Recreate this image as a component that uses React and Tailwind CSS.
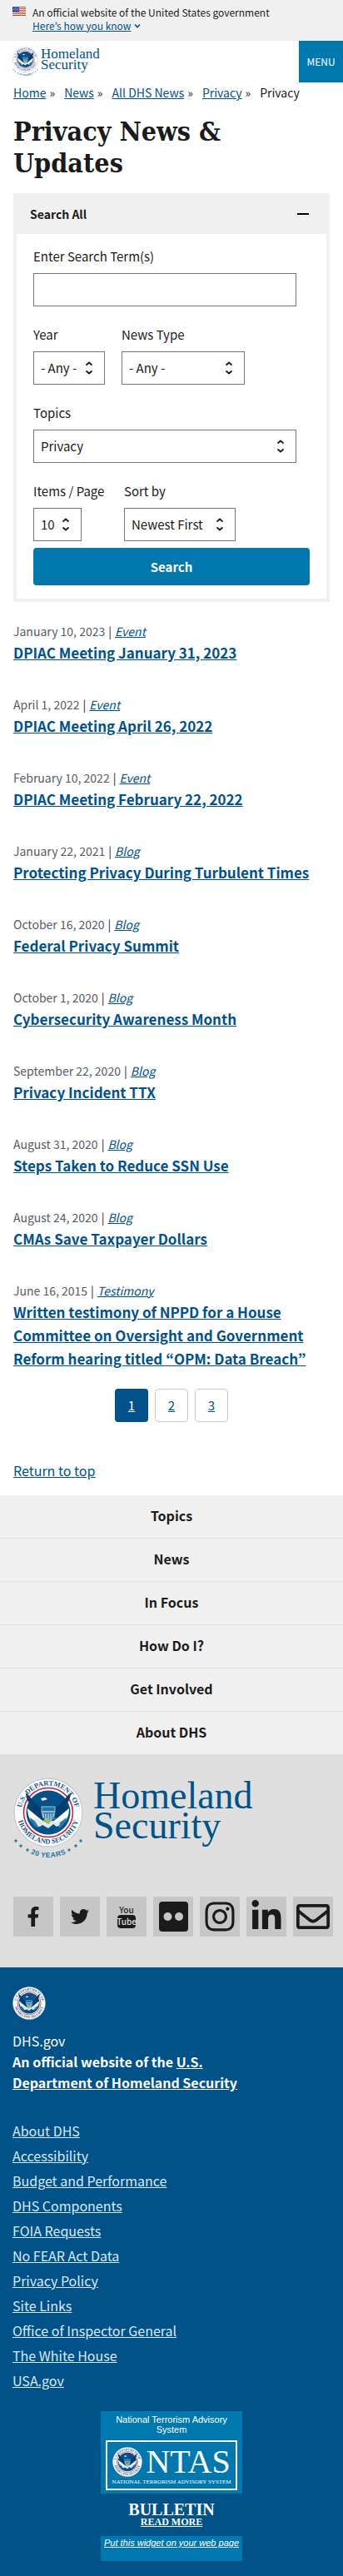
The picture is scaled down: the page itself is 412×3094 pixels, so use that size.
import { useId } from "react";
import { FaFacebookF, FaTwitter, FaInstagram, FaLinkedinIn, FaRegEnvelope } from "react-icons/fa";

const news = [
  ["January 10, 2023", "Event", "DPIAC Meeting January 31, 2023"],
  ["April 1, 2022", "Event", "DPIAC Meeting April 26, 2022"],
  ["February 10, 2022", "Event", "DPIAC Meeting February 22, 2022"],
  ["January 22, 2021", "Blog", "Protecting Privacy During Turbulent Times"],
  ["October 16, 2020", "Blog", "Federal Privacy Summit"],
  ["October 1, 2020", "Blog", "Cybersecurity Awareness Month"],
  ["September 22, 2020", "Blog", "Privacy Incident TTX"],
  ["August 31, 2020", "Blog", "Steps Taken to Reduce SSN Use"],
  ["August 24, 2020", "Blog", "CMAs Save Taxpayer Dollars"],
  ["June 16, 2015", "Testimony", "Written testimony of NPPD for a House Committee on Oversight and Government Reform hearing titled “OPM: Data Breach”"],
];

const footerNav = ["Topics", "News", "In Focus", "How Do I?", "Get Involved", "About DHS"];

const footerLinks = [
  "About DHS",
  "Accessibility",
  "Budget and Performance",
  "DHS Components",
  "FOIA Requests",
  "No FEAR Act Data",
  "Privacy Policy",
  "Site Links",
  "Office of Inspector General",
  "The White House",
  "USA.gov",
];

function Star({ x, y, r = 2.4, fill = "#1d7f95" }) {
  const pts = Array.from({ length: 10 }, (_, i) => {
    const a = (Math.PI / 5) * i - Math.PI / 2;
    const q = i % 2 ? r * 0.5 : r;
    return `${x + q * Math.cos(a)},${y + q * Math.sin(a)}`;
  }).join(" ");
  return <polygon points={pts} fill={fill} />;
}

function Seal({ className, anniversary = false }) {
  const id = useId();
  return (
    <svg className={className} viewBox={anniversary ? "0 0 84 98" : "0 0 84 84"} aria-hidden="true">
      <defs>
        <path id={`${id}t`} d="M9.5 42a32.5 32.5 0 0 1 65 0" />
        <path id={`${id}b`} d="M4.5 42a37.5 37.5 0 0 0 75 0" />
        <path id={`${id}y`} d="M2 74Q42 110 82 74" />
      </defs>
      <circle cx="42" cy="42" r="41.5" fill="#c3c8ce" />
      <circle cx="42" cy="42" r="40.3" fill="#fff" />
      <circle cx="42" cy="42" r="29.5" fill="#fff" stroke="#c41f3e" strokeWidth="1.5" />
      <circle cx="42" cy="42" r="26.5" fill="#005288" />
      <path d="M15 18c5 4 8 10 13 14 4 4 8 5 9 9l-4 10c-7-5-13-11-16-18l5 2c-4-5-7-11-7-17z" fill="#003f70" />
      <path d="M69 18c-5 4-8 10-13 14-4 4-8 5-9 9l4 10c7-5 13-11 16-18l-5 2c4-5 7-11 7-17z" fill="#003f70" />
      <path d="M17 37l17 14 4 3-6 5-9-5c-4-4-6-10-6-17z M67 37L50 51l-4 3 6 5 9-5c4-4 6-10 6-17z" fill="#fff" />
      <path d="M20 48l11 8-2 5c-4-3-8-7-9-13z M64 48l-11 8 2 5c4-3 8-7 9-13z" fill="#2c78ab" />
      <path d="M31 20q5-4 11-4 7 0 12 4l3 3-8-2-3 1v6l4 5H35l2-7-2-4-9 1z" fill="#0b4f86" />
      <path d="M33 25l5-1 3 2-6 2z" fill="#fff" />
      <path d="M34 35h16v6q-1 8-8 12-7-4-8-12z" fill="#2372a8" stroke="#dceaf2" strokeWidth=".7" />
      <path d="M34.500 41h15M36 43v5M39 43v8M42 43v9M45 43v8M48 43v5" stroke="#fff" strokeWidth="1" />
      <path d="M24 49q7 0 10 4l7-4 10 5 6-4-2 8-7-2-6 5-7-4-5 2z" fill="#dfe9ec" />
      <path d="M35 52l6-3 5 3-4 4z" fill="#a6b763" />
      <path d="M43 48l7-2M43 51l8-2" stroke="#5eb0d6" strokeWidth="1.200" />
      <g fill="#17588c" fontFamily="'Liberation Serif', serif" fontWeight="700">
        <text fontSize="8.500" textAnchor="middle">
          <textPath href={`#${id}t`} startOffset="50%">U.S. DEPARTMENT OF</textPath>
        </text>
        <text fontSize="8.500" textAnchor="middle">
          <textPath href={`#${id}b`} startOffset="50%">HOMELAND SECURITY</textPath>
        </text>
      </g>
      {anniversary && (
        <g>
          <Star x={3} y={76} />
          <Star x={9} y={82} />
          <Star x={17} y={87} fill="#2a7ca4" />
          <Star x={67} y={87} fill="#2a7ca4" />
          <Star x={75} y={82} />
          <Star x={81} y={76} />
          <text fontSize="8.500" fontWeight="700" fill="#1c74a8" fontFamily="'Liberation Sans', sans-serif" textAnchor="middle">
            <textPath href={`#${id}y`} startOffset="50%">
              <tspan dy="4">20 YEARS</tspan>
            </textPath>
          </text>
        </g>
      )}
    </svg>
  );
}

function Flag() {
  return (
    <svg className="mt-2 h-[11px] w-4 shrink-0" viewBox="0 0 16 11" aria-hidden="true">
      <path fill="#fff" d="M0 0h16v11H0z" />
      <path fill="#db3e1f" d="M7 0h9v1H7zM7 2h9v1H7zM7 4h9v1H7zM0 6h16v1H0zM0 8h16v1H0zM0 10h16v1H0z" />
      <path fill="#1e33b1" d="M0 0h8v6H0z" />
      <path stroke="#fff" strokeWidth=".7" strokeDasharray=".8 1" d="M.8 1h7M1.500 2.300h6M.8 3.600h7M1.500 4.900h6" />
    </svg>
  );
}

function SelectField({ id, label, options, className }) {
  return (
    <div className={className}>
      <label htmlFor={id} className="block whitespace-nowrap text-[15px] leading-6">{label}</label>
      <div className="relative mt-2">
        <select id={id} className="block h-10 w-full appearance-none rounded-none border border-[#757575] bg-white pr-6 pl-2 text-[15px] leading-6">
          {options.map((o) => <option key={o}>{o}</option>)}
        </select>
        <svg className="pointer-events-none absolute top-3 right-3.5 h-4 w-2.5" viewBox="0 0 10 16" fill="none" stroke="#1b1b1b" strokeWidth="1.800" aria-hidden="true">
          <path d="M1.500 4.500L5 1.500l3.500 3M1.500 11.500l3.500 3 3.500-3" />
        </svg>
      </div>
    </div>
  );
}

function YouTubeMark() {
  return (
    <svg className="size-12" viewBox="0 0 48 48" aria-hidden="true">
      <g fontFamily="'Liberation Sans Narrow', 'Noto Sans CJK KR', sans-serif" fontWeight="500" textAnchor="middle">
        <text x="24" y="20" fontSize="10" fill="#1b1b1b">You</text>
        <rect x="13" y="22" width="22" height="16" rx="4" fill="#1b1b1b" />
        <text x="24" y="34" fontSize="10" fill="#e0e0e0">Tube</text>
      </g>
    </svg>
  );
}

function FlickrMark() {
  return (
    <svg className="size-12" viewBox="0 0 48 48" aria-hidden="true">
      <rect x="7" y="6" width="35" height="36" rx="4" fill="#1b1b1b" />
      <circle cx="17.500" cy="24" r="5" fill="#c6c6c6" />
      <circle cx="31" cy="24" r="5" fill="#c6c6c6" />
    </svg>
  );
}

const social = [
  ["Facebook", <FaFacebookF className="size-6" />],
  ["Twitter", <FaTwitter className="size-[22px]" />],
  ["YouTube", <YouTubeMark />],
  ["Flickr", <FlickrMark />],
  ["Instagram", <FaInstagram className="size-10" />],
  ["LinkedIn", <FaLinkedinIn className="size-10" />],
  ["Email", <FaRegEnvelope className="size-10" />],
];

export default function App() {
  return (
    <div className="bg-white font-['Noto_Sans_CJK_KR',sans-serif] text-[15px] leading-6 text-[#1b1b1b]">
      <section aria-label="Official website" className="flex gap-2 bg-[#f0f0f0] pr-4 pb-2 pl-[15px] text-[12px] leading-4">
        <Flag />
        <div className="pt-[7px] pb-0.5">
          <p>An official website of the United States government</p>
          <button type="button" className="flex items-center gap-1 text-[#005288]">
            <span className="underline">Here’s how you know</span>
            <svg className="h-2 w-2" viewBox="0 0 8 8" fill="none" stroke="currentColor" strokeWidth="1.600" aria-hidden="true"><path d="M1 2.500l3 3 3-3" /></svg>
          </button>
        </div>
      </section>

      <header className="flex h-[50px] items-stretch justify-between pl-[15px]">
        <a href="#" className="flex gap-[3px] pt-[7px] font-['Liberation_Serif',serif] text-[17px] leading-[13px] text-[#005288]">
          <Seal className="h-9 w-[31px]" anniversary />
          <span className="pt-0.5">Homeland<br />Security</span>
        </a>
        <button type="button" className="w-[53px] bg-[#0078ae] text-[12px] text-white">MENU</button>
      </header>

      <main className="px-4">
        <nav aria-label="Breadcrumb">
          <ol className="flex gap-[11px] text-[14px] leading-6">
            {["Home", "News", "All DHS News", "Privacy"].map((c) => (
              <li key={c} className="flex gap-1"><a href="#" className="text-[#005288] underline">{c}</a><span>»</span></li>
            ))}
            <li>Privacy</li>
          </ol>
        </nav>

        <h1 className="mt-4 font-['DejaVu_Serif_Condensed','DejaVu_Serif',serif] text-[32px] leading-[38px] font-bold">Privacy News &amp;<br />Updates</h1>

        <section className="mt-[17px]">
          <h2>
            <button type="button" aria-expanded="true" className="flex h-[49px] w-full items-center justify-between bg-[#f0f0f0] pr-[25px] pl-5 text-[14px] font-bold">
              Search All
              <svg className="h-4 w-3.5" viewBox="0 0 14 16" aria-hidden="true"><path d="M0 8h14" stroke="#000" strokeWidth="2" /></svg>
            </button>
          </h2>
          <form onSubmit={(e) => e.preventDefault()} className="border-4 border-t-0 border-[#f0f0f0] pt-[15px] pr-5 pb-4 pl-5">
            <div className="flex flex-col gap-[22px] pr-4">
              <div>
                <label htmlFor="term" className="block leading-6">Enter Search Term(s)</label>
                <input id="term" type="text" className="mt-2 block h-10 w-full border border-[#757575] px-2" />
              </div>
              <div className="flex gap-5">
                <SelectField id="year" label="Year" options={["- Any -"]} className="w-[86px]" />
                <SelectField id="type" label="News Type" options={["- Any -"]} className="w-[148px]" />
              </div>
              <SelectField id="topics" label="Topics" options={["Privacy"]} />
              <div className="flex gap-[51px]">
                <SelectField id="items" label="Items / Page" options={["10"]} className="w-[58px]" />
                <SelectField id="sort" label="Sort by" options={["Newest First"]} className="w-[134px]" />
              </div>
            </div>
            <button type="submit" className="mt-2 block h-[45px] w-full rounded-sm bg-[#0078ae] font-bold text-white">Search</button>
          </form>
        </section>

        <ul className="mt-[23px] flex flex-col gap-9">
          {news.map(([date, kind, title]) => (
            <li key={title}>
              <p className="flex gap-1 text-[14px] leading-6"><span className="text-[#565c65]">{date}</span><span>|</span><a href="#" className="text-[#005288] italic underline">{kind}</a></p>
              <h3 className="text-[17px] leading-7 font-bold"><a href="#" className="text-[#005288] underline">{title}</a></h3>
            </li>
          ))}
        </ul>

        <nav aria-label="Pagination" className="mt-[22px] flex justify-center gap-2">
          {["1", "2", "3"].map((p, i) => (
            <a key={p} href="#" className={i === 0 ? "flex size-10 items-center justify-center rounded-sm bg-[#005288] text-white underline" : "flex size-10 items-center justify-center rounded-sm border border-[#c6cace] text-[#005288] underline"}>{p}</a>
          ))}
        </nav>
        <p className="mt-[46px] pb-[17px]"><a href="#" className="text-[16px] text-[#005288] underline">Return to top</a></p>
      </main>

      <footer>
        <nav aria-label="Footer" className="divide-y divide-[#dfe1e2] bg-[#f0f0f0] text-center text-[16px] font-bold">
          {footerNav.map((n) => (
            <a key={n} href="#" className="block pt-3 pb-[14px] leading-[25px]">{n}</a>
          ))}
        </nav>

        <div className="bg-[#dfdfdf] px-4 pt-[28px] pb-[37px]">
          <a href="#" className="flex gap-3 font-['Liberation_Serif',serif] text-[46px] leading-9 text-[#005288]">
            <Seal className="h-[98px] w-[84px]" anniversary />
            <span className="pt-1">Homeland<br />Security</span>
          </a>
          <ul className="mt-[45px] flex gap-2">
            {social.map(([name, icon]) => (
              <li key={name}><a href="#" aria-label={name} className="flex size-12 items-center justify-center bg-[#c6c6c6]">{icon}</a></li>
            ))}
          </ul>
        </div>

        <div className="bg-[#005288] px-[15px] pt-[23px] pb-[19px] text-[16px] text-white">
          <Seal className="size-10" />
          <p className="mt-[13px] leading-[25px]">DHS.gov</p>
          <p className="max-w-[300px] leading-[25px] font-bold">An official website of the <a href="#" className="underline">U.S. Department of Homeland Security</a></p>
          <ul className="mt-[30px]">
            {footerLinks.map((l) => (
              <li key={l} className="leading-[30px]"><a href="#" className="text-[#d9e8f6] underline">{l}</a></li>
            ))}
          </ul>

          <div className="mx-auto mt-[22px] w-[170px] text-center font-['Liberation_Sans',sans-serif] text-[11px] leading-3">
            <div className="bg-[#0078ae] px-1.5 pt-1 pb-1">
              <p>National Terrorism Advisory System</p>
              <div className="mt-[7px] flex h-[60px] flex-col items-center border-2 border-white pt-1.5 font-['Liberation_Serif',serif]">
                <div className="flex items-center gap-1">
                  <Seal className="size-9" />
                  <span className="text-[40px] leading-9">NTAS</span>
                </div>
                <p className="text-[7px] leading-3 whitespace-nowrap">NATIONAL TERRORISM ADVISORY SYSTEM</p>
              </div>
            </div>
            <a href="#" className="block py-2.5 font-['Liberation_Serif',serif] font-bold">
              <span className="block text-[20px] leading-[18px]">BULLETIN</span>
              <span className="block text-[12px] leading-[13px] underline">READ MORE</span>
            </a>
            <div className="h-[30px] bg-[#0078ae] pt-0.5"><a href="#" className="whitespace-nowrap italic underline">Put this widget on your web page</a></div>
          </div>
        </div>
      </footer>
    </div>
  );
}
